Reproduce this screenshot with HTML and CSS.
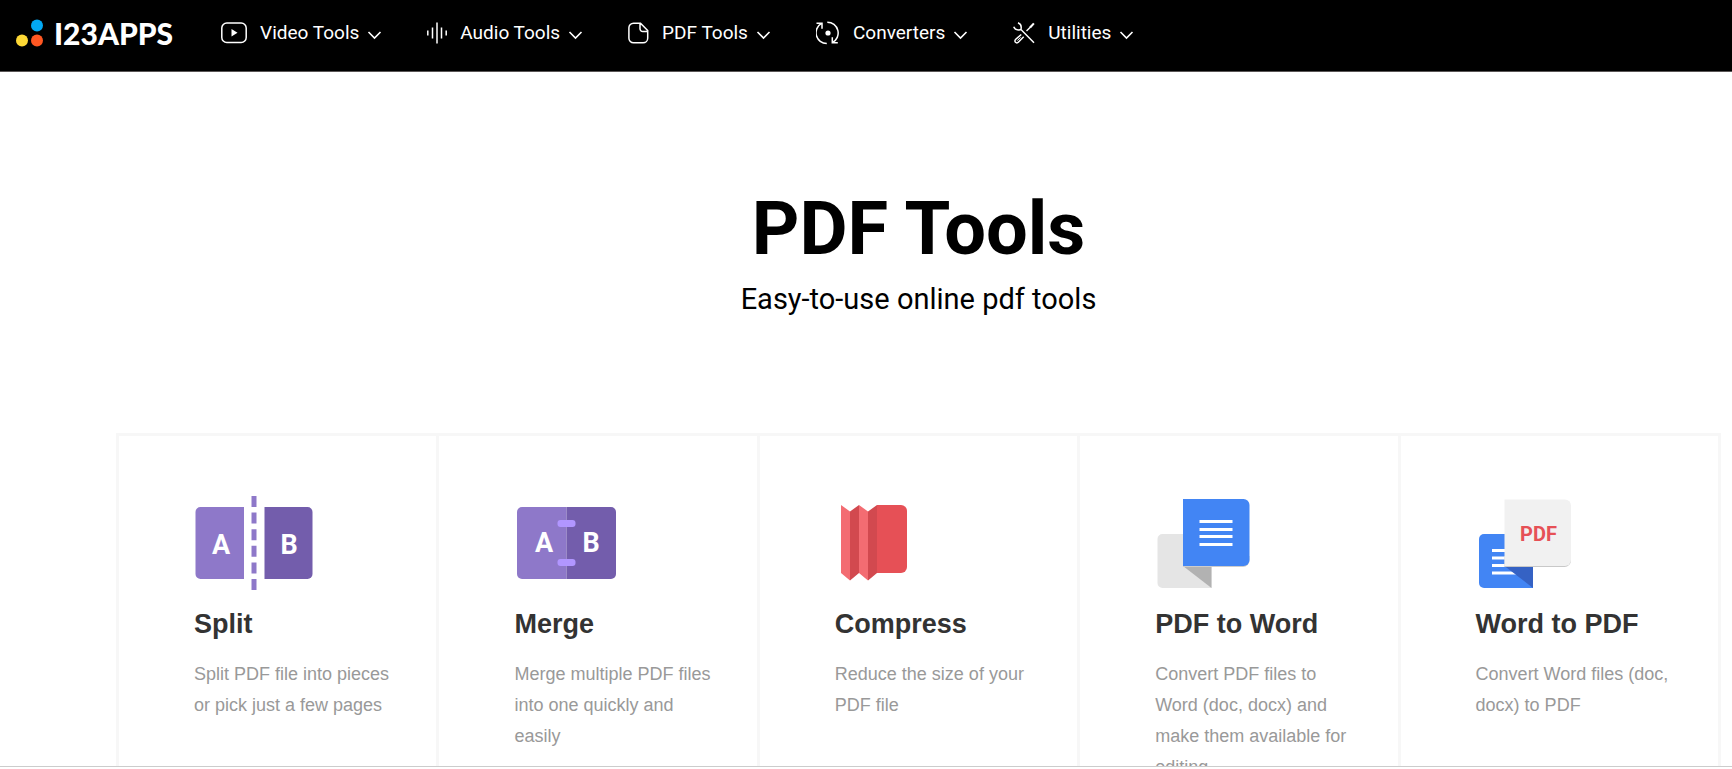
FILE: index.html
```html
<!DOCTYPE html>
<html lang="en">
<head>
<meta charset="utf-8">
<title>PDF Tools</title>
<link rel="stylesheet" href="styles.css">
</head>
<body>
<header class="header">
  <a class="logo" href="#">
    <svg class="logo-mark" width="28" height="28" viewBox="0 0 28 28" aria-hidden="true">
      <circle cx="21" cy="6.500" r="6" fill="#03a9f4"/>
      <circle cx="6" cy="21.500" r="6" fill="#fdd835"/>
      <circle cx="21" cy="21.500" r="6" fill="#ff5722"/>
    </svg>
    <span class="logo-text">I23APPS</span>
  </a>
  <nav class="nav">
    <button class="nav-item" type="button">
      <svg class="nav-icon" width="26" height="24" viewBox="0 0 26 24" aria-hidden="true"><rect x=".8" y="2" width="24.400" height="19.400" rx="5"/><path class="solid" d="M10.500 8v7.400l6-3.700z"/></svg>
      <span>Video Tools</span>
      <svg class="chevron" width="15" height="10" viewBox="0 0 15 10" aria-hidden="true"><path d="M1.500 2l6 6 6-6"/></svg>
    </button>
    <button class="nav-item" type="button">
      <svg class="nav-icon" width="20" height="24" viewBox="0 0 20 24" aria-hidden="true"><path d="M.8 9.500v5M5.500 6.500v11M10 1.500v21M14.500 6.500v11M19.200 9.500v5"/></svg>
      <span>Audio Tools</span>
      <svg class="chevron" width="15" height="10" viewBox="0 0 15 10" aria-hidden="true"><path d="M1.500 2l6 6 6-6"/></svg>
    </button>
    <button class="nav-item" type="button">
      <svg class="nav-icon" width="21" height="24" viewBox="0 0 21 24" aria-hidden="true"><path d="M12.500 2.200H5.500A4.600 4.600 0 0 0 .9 6.800v10.400a4.600 4.600 0 0 0 4.600 4.600h9.600a4.600 4.600 0 0 0 4.600-4.600V9.500zM12 2.200v5.600a2.800 2.800 0 0 0 2.800 2.800h4.900"/></svg>
      <span>PDF Tools</span>
      <svg class="chevron" width="15" height="10" viewBox="0 0 15 10" aria-hidden="true"><path d="M1.500 2l6 6 6-6"/></svg>
    </button>
    <button class="nav-item" type="button">
      <svg class="nav-icon" width="24" height="24" viewBox="0 0 24 24" aria-hidden="true"><path d="M11.300 1.200a10.800 10.800 0 0 1 5.200 20.300M21.800 21.800h-5.500v-5.500M10.800 22.600a10.800 10.800 0 0 1-5.300-20.200M.5 2.200h5.500v5.500"/><circle class="solid" cx="12" cy="12" r="2.600"/></svg>
      <span>Converters</span>
      <svg class="chevron" width="15" height="10" viewBox="0 0 15 10" aria-hidden="true"><path d="M1.500 2l6 6 6-6"/></svg>
    </button>
    <button class="nav-item" type="button">
      <svg class="nav-icon" width="22" height="24" viewBox="0 0 22 24" aria-hidden="true"><path d="M.7 5.800q1.500 3.500 5.300 3.200L8 8.500l13 13.300M5 1.700q3.500 1.500 3.200 5L8 8.500"/><path d="M13.500 10l4-4"/><path class="solid" d="M16.300 5.700l3.800-4 1.500 1.300-3.700 4.200z"/><path d="M8.300 13.500l-5.800 5a1.900 1.900 0 0 0 2.800 2.800l5.400-5.600"/><path d="M4.300 19.600l3.200-3.200" stroke-width="1"/></svg>
      <span>Utilities</span>
      <svg class="chevron" width="15" height="10" viewBox="0 0 15 10" aria-hidden="true"><path d="M1.500 2l6 6 6-6"/></svg>
    </button>
  </nav>
</header>
<main class="main">
  <section class="hero">
    <h1 class="hero-title">PDF Tools</h1>
    <p class="hero-sub">Easy-to-use online pdf tools</p>
  </section>
  <section class="tools">
    <a class="tool" href="#">
      <svg class="tool-icon" width="120" height="96" viewBox="0 0 120 96" aria-hidden="true">
        <path fill="#8e78c9" d="M50 11v72H6.500a5 5 0 0 1-5-5V16a5 5 0 0 1 5-5z"/>
        <path fill="#735dac" d="M70.500 11h43a5 5 0 0 1 5 5v62a5 5 0 0 1-5 5h-43z"/>
        <path stroke="#8e78c9" stroke-width="5" stroke-dasharray="11 5.600" d="M60 0v94"/>
        <text class="glyph" x="27" y="58">A</text><text class="glyph" x="95" y="58">B</text>
      </svg>
      <h2 class="tool-title">Split</h2>
      <p class="tool-text">Split PDF file into pieces or pick just a few pages</p>
    </a>
    <a class="tool" href="#">
      <svg class="tool-icon" width="120" height="96" viewBox="0 0 120 96" aria-hidden="true">
        <path fill="#8e78c9" d="M52.500 11v72H8a5 5 0 0 1-5-5V16a5 5 0 0 1 5-5z"/>
        <path fill="#735dac" d="M52.500 11H97a5 5 0 0 1 5 5v62a5 5 0 0 1-5 5H52.500z"/>
        <rect x="43.500" y="24" width="18" height="7" rx="3" fill="#b196ff"/>
        <rect x="43.500" y="63" width="18" height="7" rx="3" fill="#b196ff"/>
        <text class="glyph" x="30" y="56">A</text><text class="glyph" x="77" y="56">B</text>
      </svg>
      <h2 class="tool-title">Merge</h2>
      <p class="tool-text">Merge multiple PDF files into one quickly and easily</p>
    </a>
    <a class="tool" href="#">
      <svg class="tool-icon" width="120" height="96" viewBox="0 0 120 96" aria-hidden="true">
        <path fill="#e65056" d="M42 9h24a6 6 0 0 1 6 6v56a6 6 0 0 1-6 6H42z"/>
        <path fill="#f36c72" d="M6 9l9 6.500v69L6 77zM24 9l9 6.500v69L24 77z"/>
        <path fill="#d2494f" d="M24 9l-9 6.500v69l9-7.500zM42 9l-9 6.500v69l9-7.500z"/>
      </svg>
      <h2 class="tool-title">Compress</h2>
      <p class="tool-text">Reduce the size of your PDF file</p>
    </a>
    <a class="tool" href="#">
      <svg class="tool-icon" width="120" height="96" viewBox="0 0 120 96" aria-hidden="true">
        <path fill="#e5e5e5" d="M7.500 38h49v54h-49a5 5 0 0 1-5-5V43a5 5 0 0 1 5-5z"/>
        <path fill="#b2b2b2" d="M28 70h28.500v22z"/>
        <path fill="#ccc" d="M28 60h66.500v4.500a6.500 6.500 0 0 1-6.500 6.500H28z"/>
        <path fill="#4285f4" d="M28 3h60.500a6 6 0 0 1 6 6v55a6 6 0 0 1-6 6H28z"/>
        <path fill="#fff" d="M44.500 24h33v3h-33zM44.500 32h33v3h-33zM44.500 39h33v3h-33zM44.500 47h33v3h-33z"/>
      </svg>
      <h2 class="tool-title">PDF to Word</h2>
      <p class="tool-text">Convert PDF files to Word (doc, docx) and make them available for editing</p>
    </a>
    <a class="tool" href="#">
      <svg class="tool-icon" width="120" height="96" viewBox="0 0 120 96" aria-hidden="true">
        <path fill="#4285f4" d="M8 38h49v54H8a5 5 0 0 1-5-5V43a5 5 0 0 1 5-5z"/>
        <path fill="#fff" d="M16 53h30v3H16zM16 60.500h30v3H16zM16 68h30v3H16zM16 75.500h30v3H16z"/>
        <path fill="#3562c4" d="M28.500 70H57v22z"/>
        <path fill="#c8c8c8" d="M28.500 60H95v4.500a6.500 6.500 0 0 1-6.500 6.500h-60z"/>
        <path fill="#f1f1f1" d="M28.500 3.500H89a6 6 0 0 1 6 6V64a6 6 0 0 1-6 6H28.500z"/>
        <text class="glyph glyph-pdf" x="62.500" y="45">PDF</text>
      </svg>
      <h2 class="tool-title">Word to PDF</h2>
      <p class="tool-text">Convert Word files (doc, docx) to PDF</p>
    </a>
  </section>
</main>
</body>
</html>
```
FILE: styles.css
```css
* { box-sizing: border-box; }

body {
  margin: 0;
  height: 100vh;
  padding-bottom: 2px;
  display: flex;
  flex-direction: column;
  overflow: hidden;
  background: #fff;
  color: #000;
  font-family: "Liberation Sans", Arial, sans-serif;
}

.header {
  flex: none;
  display: flex;
  align-items: center;
  gap: 48px;
  padding: 15px 16px 20px;
  background: #000;
  border-bottom: 1px solid #5a5656;
}

.logo {
  display: flex;
  align-items: center;
  gap: 10px;
  color: #fff;
  text-decoration: none;
}

.logo-text {
  font: 900 30px/36px Lato, sans-serif;
}

.nav {
  display: flex;
  gap: 45px;
}

.nav-item {
  display: flex;
  align-items: center;
  gap: 8px;
  padding: 0;
  border: 0;
  background: none;
  color: #fff;
  font: 400 19px/24px Roboto, sans-serif;
  white-space: nowrap;
  cursor: pointer;
}

.nav-icon {
  margin-right: 5px;
  fill: none;
  stroke: #fff;
  stroke-width: 1.5;
}

.nav-icon .solid { fill: #fff; stroke: none; }

.chevron {
  margin-top: 3px;
  fill: none;
  stroke: #fff;
  stroke-width: 1.6;
}

.main {
  flex: 1;
  min-height: 0;
  overflow: hidden;
  padding: 0 11px 0 116px;
  border-bottom: 1px solid #ccc;
}

.hero {
  padding: 113px 0 116px;
  text-align: center;
}

.hero-title {
  margin: 0;
  font: 700 74px/88px Roboto, sans-serif;
}

.hero-sub {
  margin: 8px 0 0;
  font: 400 29px/36px Roboto, sans-serif;
}

.tools {
  display: grid;
  grid-template-columns: repeat(5, 1fr);
  border: solid #f7f7f7;
  border-width: 3px 3px 3px 0;
}

.tool {
  padding: 60px 36px 60px 75px;
  border-left: 3px solid #f7f7f7;
  color: #333;
  text-decoration: none;
}

.tool-icon { display: block; }

.tool-title {
  margin: 14px 0 17px;
  font-size: 27px;
  line-height: 36px;
}

.tool-text {
  margin: 0;
  color: #999;
  font-size: 18px;
  line-height: 31px;
}

.glyph {
  fill: #fff;
  font: 700 27px Roboto, sans-serif;
  text-anchor: middle;
}

.glyph-pdf {
  fill: #e65056;
  font-size: 20px;
}
```
